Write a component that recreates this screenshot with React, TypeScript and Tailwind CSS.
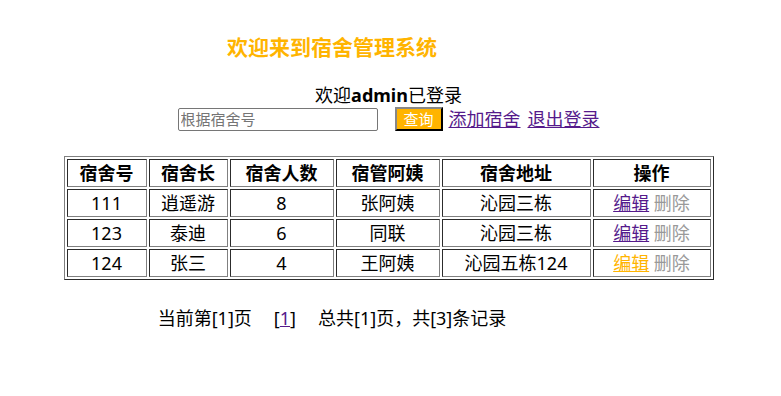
// 宿舍管理系统 - 首页列表
interface Dorm {
  no: string;
  leader: string;
  count: number;
  keeper: string;
  address: string;
  hover?: boolean;
}

const dorms: Dorm[] = [
  { no: '111', leader: '逍遥游', count: 8, keeper: '张阿姨', address: '沁园三栋' },
  { no: '123', leader: '泰迪', count: 6, keeper: '同联', address: '沁园三栋' },
  { no: '124', leader: '张三', count: 4, keeper: '王阿姨', address: '沁园五栋124', hover: true },
];

const headers = ['宿舍号', '宿舍长', '宿舍人数', '宿管阿姨', '宿舍地址', '操作'];
const widths = ['w-[80px]', 'w-[79px]', 'w-[104px]', 'w-[104px]', 'w-[149px]', 'w-[118px]'];

// 旧式 table border="1" 的样式：单元格 inset，表格 outset
const cell = 'border border-[#808080] [border-style:inset] p-0 h-[28px] leading-[24px] text-center';

export default function App() {
  return (
    <div className="min-h-[396px] bg-white text-black text-[18px] font-['Noto_Sans','Noto_Sans_CJK_SC',sans-serif]">
      <div className="pt-[33px] w-[664px] text-center">
        <h2 className="text-[21px] leading-[28px] font-bold text-[#FFB400]">欢迎来到宿舍管理系统</h2>
      </div>

      <p className="mt-[22px] text-center leading-[24px] pr-[4px]">
        欢迎<b>admin</b>已登录
      </p>

      {/* 查询栏 */}
      <div className="flex items-center justify-center h-[24px] pr-[4px]">
        <input
          placeholder="根据宿舍号"
          className="w-[200px] h-[23px] border border-[#767676] rounded-[2px] px-[2px] text-[15px] leading-[20px] placeholder:text-[#757575] outline-none"
        />
        <button className="ml-[17px] w-[48px] h-[24px] bg-[#FFB400] text-white text-[15px] leading-[20px] border-2 border-[#333] [border-style:outset]">
          查询
        </button>
        <a href="#" className="ml-[6px] text-[#551A8B] underline leading-[24px]">添加宿舍</a>
        <a href="#" className="ml-[7px] text-[#551A8B] underline leading-[24px]">退出登录</a>
      </div>

      {/* 宿舍列表 */}
      <div className="mt-[25px] flex justify-center pr-[4px]">
        <table className="border border-[#808080] [border-style:outset] border-separate border-spacing-[2px]">
          <thead>
            <tr>
              {headers.map((h, i) => (
                <th key={h} className={`${cell} ${widths[i]} font-bold`}>{h}</th>
              ))}
            </tr>
          </thead>
          <tbody>
            {dorms.map((d) => (
              <tr key={d.no}>
                <td className={cell}>{d.no}</td>
                <td className={cell}>{d.leader}</td>
                <td className={cell}>{d.count}</td>
                <td className={cell}>{d.keeper}</td>
                <td className={cell}>{d.address}</td>
                <td className={cell}>
                  <a href="#" className={`underline ${d.hover ? 'text-[#FFB400]' : 'text-[#551A8B]'}`}>编辑</a>{' '}
                  <a href="#" className="text-[#999999] no-underline">删除</a>
                </td>
              </tr>
            ))}
          </tbody>
        </table>
      </div>

      {/* 分页 */}
      <div className="mt-[26px] w-[664px] flex justify-center gap-[22px] leading-[24px]">
        <span>当前第[1]页</span>
        <span>[<a href="#" className="text-[#551A8B] underline">1</a>]</span>
        <span>总共[1]页，共[3]条记录</span>
      </div>
    </div>
  );
}
